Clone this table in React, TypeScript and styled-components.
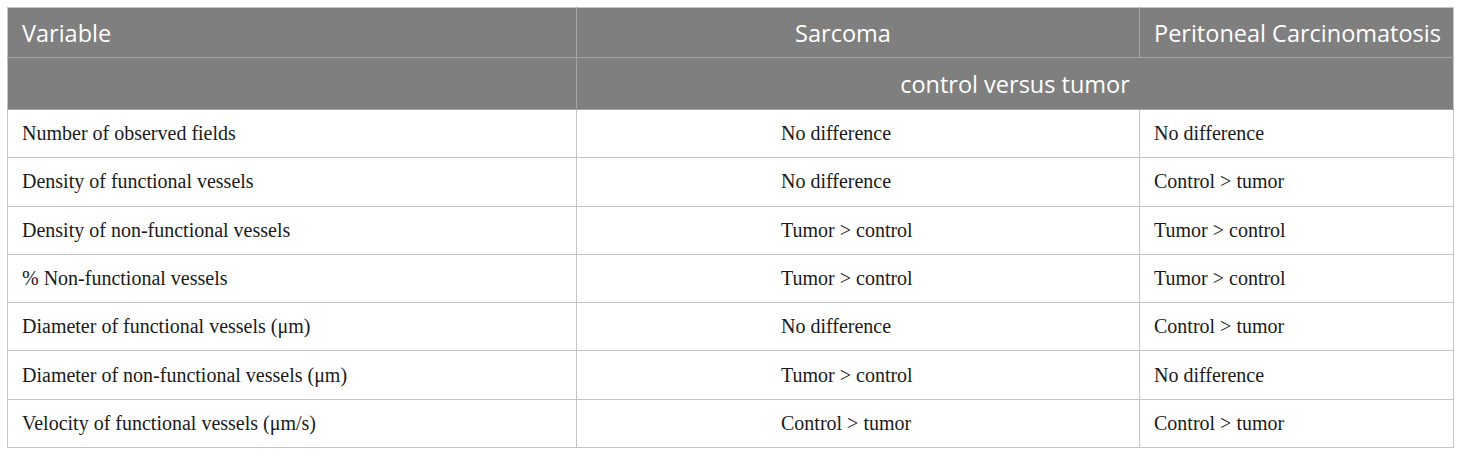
import React from "react";
import styled, { createGlobalStyle } from "styled-components";

const Global = createGlobalStyle`
  html, body { margin: 0; padding: 0; background: #ffffff; }
  body { padding: 7px; }
`;

const Table = styled.table`
  width: 1446px;
  border-collapse: collapse;
  table-layout: fixed;
  border: 1px solid #c4c4c4;
`;

const HeadRow = styled.tr<{ $h: number }>`
  height: ${(p) => p.$h}px;
  background: #7f7f7f;
`;

const Th = styled.th<{ $align?: string; $pad?: number; $padR?: number; $divider?: boolean }>`
  font-family: "Open Sans", "Noto Sans", sans-serif;
  font-weight: 400;
  font-size: 23.5px;
  color: #ffffff;
  text-align: ${(p) => p.$align || "left"};
  padding: 0 ${(p) => p.$padR ?? 0}px 0 ${(p) => p.$pad ?? 14}px;
  border-bottom: 1px solid #a3a3a3;
  border-right: ${(p) => (p.$divider ? "1px solid #a3a3a3" : "none")};
  vertical-align: middle;
  white-space: nowrap;
`;

const Row = styled.tr`
  height: 48.3px;
`;

const Td = styled.td<{ $pad: number }>`
  font-family: "Liberation Serif", "Times New Roman", serif;
  font-size: 20px;
  color: #1a1a1a;
  padding: 0 0 0 ${(p) => p.$pad}px;
  border-bottom: 1px solid #c4c4c4;
  border-right: 1px solid #c4c4c4;
  vertical-align: middle;
  white-space: nowrap;
`;

const rows: [string, string, string][] = [
  ["Number of observed fields", "No difference", "No difference"],
  ["Density of functional vessels", "No difference", "Control > tumor"],
  ["Density of non-functional vessels", "Tumor > control", "Tumor > control"],
  ["% Non-functional vessels", "Tumor > control", "Tumor > control"],
  ["Diameter of functional vessels (μm)", "No difference", "Control > tumor"],
  ["Diameter of non-functional vessels (μm)", "Tumor > control", "No difference"],
  ["Velocity of functional vessels (μm/s)", "Control > tumor", "Control > tumor"],
];

export default function App() {
  return (
    <>
      <Global />
      <Table>
        <colgroup>
          <col style={{ width: 569 }} />
          <col style={{ width: 563 }} />
          <col style={{ width: 314 }} />
        </colgroup>
        <thead>
          <HeadRow $h={50}>
            <Th $divider>Variable</Th>
            <Th $divider $align="center" $pad={0} $padR={30}>Sarcoma</Th>
            <Th>Peritoneal Carcinomatosis</Th>
          </HeadRow>
          <HeadRow $h={52}>
            <Th $divider></Th>
            <Th colSpan={2} $align="center" $pad={0}>control versus tumor</Th>
          </HeadRow>
        </thead>
        <tbody>
          {rows.map((r) => (
            <Row key={r[0]}>
              <Td $pad={14}>{r[0]}</Td>
              <Td $pad={204}>{r[1]}</Td>
              <Td $pad={14}>{r[2]}</Td>
            </Row>
          ))}
        </tbody>
      </Table>
    </>
  );
}
